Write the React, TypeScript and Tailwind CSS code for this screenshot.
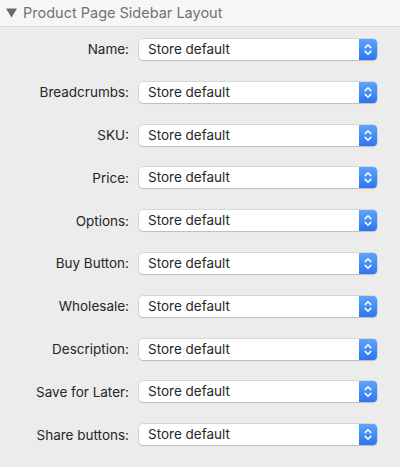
const FIELDS = [
  "Name",
  "Breadcrumbs",
  "SKU",
  "Price",
  "Options",
  "Buy Button",
  "Wholesale",
  "Description",
  "Save for Later",
  "Share buttons",
];

function Stepper() {
  return (
    <span className="flex h-full w-[18px] shrink-0 items-center justify-center rounded-r-[4px] bg-gradient-to-b from-[#5ea4fb] to-[#2a76ee]">
      <svg width="8" height="13" viewBox="0 0 8 13" fill="none" stroke="white" strokeWidth="1.5" strokeLinecap="round" strokeLinejoin="round">
        <path d="M1.2 4.6 4 1.8l2.8 2.8" />
        <path d="M1.2 8.4 4 11.2l2.8-2.8" />
      </svg>
    </span>
  );
}

function Select({ value }: { value: string }) {
  return (
    <div className="flex h-[21px] w-[238px] items-stretch rounded-[4px] bg-white shadow-[0_0_0_0.5px_rgba(0,0,0,0.18),0_1px_1px_rgba(0,0,0,0.12)]">
      <span className="flex-1 pl-[9px] text-[13.5px] leading-[21px] text-[#262626]">{value}</span>
      <Stepper />
    </div>
  );
}

export default function App() {
  return (
    <div className="h-[467px] w-[400px] bg-[#ececec] font-['Inter','Liberation_Sans',sans-serif]">
      <div className="flex h-[27px] items-center gap-[6px] border-b border-[#dcdcdc] bg-[#f6f6f6] pl-[6px]">
        <svg width="11" height="10" viewBox="0 0 11 10">
          <path d="M0 0.5h11L5.5 9.5z" fill="#6a6a6a" />
        </svg>
        <span className="text-[14.5px] text-[#727272]">Product Page Sidebar Layout</span>
      </div>
      <div className="flex flex-col gap-[21.8px] pt-[12px]">
        {FIELDS.map((f) => (
          <div key={f} className="flex items-center">
            <label className="w-[129px] text-right text-[13.5px] text-[#262626]">{f}:</label>
            <div className="pl-[10px]">
              <Select value="Store default" />
            </div>
          </div>
        ))}
      </div>
    </div>
  );
}
